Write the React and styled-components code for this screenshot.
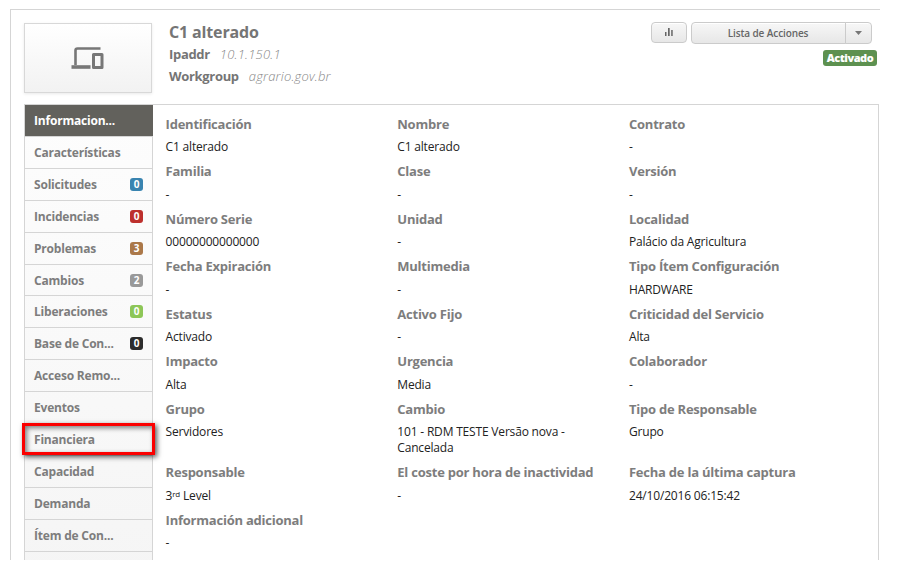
import React from 'react';
import styled, { createGlobalStyle } from 'styled-components';

const GlobalStyle = createGlobalStyle`
  * { box-sizing: border-box; }
  body { margin: 0; background: #fff; font-family: 'Open Sans', sans-serif; overflow: hidden; }
`;

const Page = styled.main`
  width: 870px;
  height: 551px;
  margin: 9px 0 0 10px;
  padding: 13px 1px 0 13px;
  border-top: 1px solid #d5d5d5;
  border-left: 1px solid #d5d5d5;
  overflow: hidden;
`;

const Header = styled.header`
  display: flex;
  height: 81px;
`;

const Thumbnail = styled.div`
  display: flex;
  align-items: center;
  justify-content: center;
  width: 128px;
  height: 70px;
  padding-right: 2px;
  border: 1px solid #d8d8d8;
  background: linear-gradient(#fff, #f2f2f2);
  box-shadow: 0 1px 3px rgba(0, 0, 0, 0.09);
`;

const Summary = styled.div`
  flex: 1;
  padding-left: 17px;
  color: #757575;
`;

const Title = styled.h1`
  margin: -2px 0 0;
  font-size: 16px;
  line-height: 22px;
  font-weight: 700;
  letter-spacing: -0.15px;
`;

const Property = styled.div`
  display: flex;
  gap: 10px;
  height: 22px;
  font-size: 13px;
  line-height: 22px;
  font-weight: 700;
  letter-spacing: -0.32px;
`;

const PropertyValue = styled.em`
  font-weight: 300;
  letter-spacing: 0.2px;
  color: #888;
`;

const Actions = styled.div`
  display: flex;
  flex-direction: column;
  align-items: flex-end;
  gap: 6px;
  padding-right: 2px;
`;

const ButtonRow = styled.div`
  display: flex;
  align-items: flex-start;
  gap: 4px;
  margin: -1px 5px 0 0;
`;

const Button = styled.button`
  display: flex;
  align-items: center;
  justify-content: center;
  width: ${(p) => p.$width}px;
  height: ${(p) => p.$height || 22}px;
  padding: 0 1px 1px 0;
  border: 1px solid #cbcbcb;
  border-radius: ${(p) => p.$radius || '4px'};
  margin-left: ${(p) => (p.$joined ? '-1px' : 0)};
  background: linear-gradient(#f7f7f7, #e7e7e7);
  box-shadow: inset 0 1px 0 #fff;
  color: #666;
  font: 600 10px 'Open Sans', sans-serif;
  letter-spacing: -0.1px;
`;

const SplitButton = styled.div`
  display: flex;
`;

const Status = styled.span`
  width: 54px;
  height: 16px;
  border-radius: 3px;
  background: #5d9150;
  color: #fff;
  font-size: 11px;
  line-height: 16px;
  font-weight: 800;
  letter-spacing: -0.45px;
  text-align: center;
`;

const Body = styled.div`
  display: flex;
  width: 855px;
  height: 480px;
  border: 1px solid #d5d5d5;
`;

const Sidebar = styled.nav`
  width: 128px;
  flex: none;
  border-right: 1px solid #d5d5d5;
  background: linear-gradient(#fdfdfd, #f5f5f5);
`;

const Tab = styled.div`
  position: relative;
  display: flex;
  align-items: center;
  justify-content: space-between;
  height: ${(p) => p.$height || 32}px;
  margin-right: ${(p) => (p.$active ? '-1px' : 0)};
  padding: 0 9px;
  border-bottom: 1px solid #d5d5d5;
  background: ${(p) => (p.$active ? '#62615c' : 'transparent')};
  color: ${(p) => (p.$active ? '#fff' : '#7d7d7d')};
  font-size: 12px;
  font-weight: 700;
  letter-spacing: -0.2px;
`;

const Count = styled.span`
  width: 13px;
  height: 13px;
  border-radius: 3px;
  background: ${(p) => p.$color};
  color: #fff;
  font-size: 10px;
  line-height: 13px;
  font-weight: 700;
  letter-spacing: 0;
  text-align: center;
`;

const Highlight = styled.span`
  position: absolute;
  inset: -1px -3px 0 -3px;
  z-index: 1;
  border: 3px solid #fb0000;
  box-shadow: 2px 2px 5px rgba(0, 0, 0, 0.65), inset 2px 2px 5px rgba(0, 0, 0, 0.5);
`;

const Details = styled.dl`
  display: grid;
  grid-template-columns: 231.7px 231.7px 231.5px;
  grid-auto-rows: min-content;
  margin: 0;
  padding: 7.9px 0 0 12.6px;
`;

const Field = styled.div`
  min-height: 47.5px;
  padding-bottom: 5.2px;
`;

const Term = styled.dt`
  font-size: 13px;
  line-height: 22px;
  font-weight: 700;
  letter-spacing: -0.23px;
  color: #7d7d7d;
  white-space: nowrap;
`;

const Value = styled.dd`
  width: 190px;
  margin: 4.3px 0 0;
  font-size: 12px;
  line-height: 16px;
  letter-spacing: -0.18px;
  color: #222;
`;

const Ordinal = styled.sup`
  font-size: 8px;
  line-height: 0;
  vertical-align: 3px;
`;

const tabs = [
  { label: 'Informacion...', active: true },
  { label: 'Características' },
  { label: 'Solicitudes', count: 0, color: '#3984b0' },
  { label: 'Incidencias', count: 0, color: '#bd302d' },
  { label: 'Problemas', count: 3, color: '#ab7849' },
  { label: 'Cambios', count: 2, color: '#999999', height: 31 },
  { label: 'Liberaciones', count: 0, color: '#8dc657' },
  { label: 'Base de Con...', count: 0, color: '#2c2c2c' },
  { label: 'Acceso Remo...' },
  { label: 'Eventos' },
  { label: 'Financiera', highlighted: true },
  { label: 'Capacidad' },
  { label: 'Demanda' },
  { label: 'Ítem de Con...' },
];

const fields = [
  ['Identificación', 'C1 alterado'], ['Nombre', 'C1 alterado'], ['Contrato', '-'],
  ['Familia', '-'], ['Clase', '-'], ['Versión', '-'],
  ['Número Serie', '00000000000000'], ['Unidad', '-'], ['Localidad', 'Palácio da Agricultura'],
  ['Fecha Expiración', '-'], ['Multimedia', '-'], ['Tipo Ítem Configuración', 'HARDWARE'],
  ['Estatus', 'Activado'], ['Activo Fijo', '-'], ['Criticidad del Servicio', 'Alta'],
  ['Impacto', 'Alta'], ['Urgencia', 'Media'], ['Colaborador', '-'],
  ['Grupo', 'Servidores'], ['Cambio', '101 - RDM TESTE Versão nova - Cancelada'], ['Tipo de Responsable', 'Grupo'],
  ['Responsable', <>3<Ordinal>rd</Ordinal> Level</>], ['El coste por hora de inactividad', '-'], ['Fecha de la última captura', '24/10/2016 06:15:42'],
  ['Información adicional', '-'],
];

const DevicesIcon = () => (
  <svg width="33" height="22" viewBox="0 0 33 22" fill="none" stroke="#777" strokeLinejoin="round">
    <path d="M29.5 1.5H6.5Q4.5 1.5 4.5 3.5V18" strokeWidth="2.6" />
    <path d="M0.5 20H19.5" strokeWidth="3.6" />
    <rect x="22.5" y="7.5" width="8.5" height="13" strokeWidth="3" />
  </svg>
);

const BarsIcon = () => (
  <svg width="8" height="8" viewBox="0 0 8 8" fill="#666">
    <path d="M0 4h1.5v4H0zM3 0h1.7v8H3zM6.2 2h1.5v6H6.2z" />
  </svg>
);

const Caret = () => (
  <svg width="7" height="4" viewBox="0 0 7 4" fill="#777"><path d="M0 0h7L3.5 4z" /></svg>
);

export default function App() {
  return (
    <>
      <GlobalStyle />
      <Page>
        <Header>
          <Thumbnail><DevicesIcon /></Thumbnail>
          <Summary>
            <Title>C1 alterado</Title>
            <Property>Ipaddr <PropertyValue>10.1.150.1</PropertyValue></Property>
            <Property>Workgroup <PropertyValue>agrario.gov.br</PropertyValue></Property>
          </Summary>
          <Actions>
            <ButtonRow>
              <Button $width={36} $height={21} aria-label="Estadísticas"><BarsIcon /></Button>
              <SplitButton>
                <Button $width={155} $radius="4px 0 0 4px">Lista de Acciones</Button>
                <Button $width={27} $radius="0 4px 4px 0" $joined aria-label="Abrir"><Caret /></Button>
              </SplitButton>
            </ButtonRow>
            <Status>Activado</Status>
          </Actions>
        </Header>
        <Body>
          <Sidebar>
            {tabs.map((tab) => (
              <Tab key={tab.label} $active={tab.active} $height={tab.height}>
                {tab.label}
                {tab.color && <Count $color={tab.color}>{tab.count}</Count>}
                {tab.highlighted && <Highlight />}
              </Tab>
            ))}
          </Sidebar>
          <Details>
            {fields.map(([term, value]) => (
              <Field key={term}>
                <Term>{term}</Term>
                <Value>{value}</Value>
              </Field>
            ))}
          </Details>
        </Body>
      </Page>
    </>
  );
}
